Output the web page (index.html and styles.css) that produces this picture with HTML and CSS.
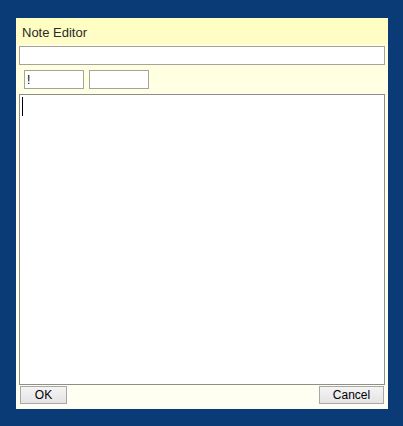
FILE: index.html
```html
<!DOCTYPE html>
<html>
<head>
<meta charset="utf-8">
<link rel="stylesheet" href="styles.css">
</head>
<body>
<div class="dialog">
  <div class="header">Note Editor</div>
  <input class="title-input" type="text" value="">
  <div class="tag-row">
    <input class="tag-input" type="text" value="!">
    <input class="tag-input" type="text" value="">
  </div>
  <div class="editor">
    <textarea class="body-text"></textarea>
    <span class="caret"></span>
  </div>
  <div class="actions">
    <button class="btn btn-ok">OK</button>
    <button class="btn btn-cancel">Cancel</button>
  </div>
</div>
</body>
</html>
```
FILE: styles.css
```css
html, body {
  margin: 0;
  padding: 0;
}
body {
  background: #0b3b77;
  width: 403px;
  height: 426px;
  padding: 18px 0 0 16px;
  box-sizing: border-box;
  font-family: "Liberation Sans", Tahoma, sans-serif;
}
.dialog {
  width: 372px;
  height: 391px;
  box-sizing: border-box;
  padding: 0 3px 5px 3px;
  display: flex;
  flex-direction: column;
  background: linear-gradient(#ffffd6 0px, #ffffe6 80px, #fffff2 391px);
}
.header {
  height: 26px;
  box-sizing: border-box;
  margin: 0 -3px;
  padding: 2px 0 0 6px;
  display: flex;
  align-items: center;
  font-size: 13px;
  color: #2a2a2a;
  background: linear-gradient(#ffffc0, #fffcc8);
}
.title-input {
  margin: 2px 0 0 0;
  width: 366px;
  height: 19px;
  box-sizing: border-box;
  border: 1px solid #a4a49c;
  background: #fff;
  padding: 0 3px;
  outline: none;
  font-family: "Liberation Sans", sans-serif;
  font-size: 12px;
}
.tag-row {
  margin-top: 5px;
  display: flex;
  gap: 5px;
  padding-left: 5px;
}
.tag-input {
  margin: 0;
  width: 60px;
  height: 19px;
  box-sizing: border-box;
  border: 1px solid #a4a49c;
  background: #fff;
  padding: 0 2px;
  outline: none;
  font-family: "Liberation Sans", sans-serif;
  font-size: 12px;
  color: #000;
}
.editor {
  position: relative;
  margin-top: 5px;
  height: 291px;
}
.body-text {
  display: block;
  margin: 0;
  width: 366px;
  height: 291px;
  box-sizing: border-box;
  border: 1px solid #8e8e8a;
  background: #fff;
  resize: none;
  outline: none;
}
.caret {
  position: absolute;
  left: 3px;
  top: 3px;
  width: 1px;
  height: 19px;
  background: #000;
}
.actions {
  margin-top: 1px;
  display: flex;
  justify-content: space-between;
  padding: 0 1px;
}
.btn {
  margin: 0;
  height: 18px;
  box-sizing: border-box;
  border: 1px solid #a8a8a8;
  background: linear-gradient(#f4f4f4, #e4e4e4);
  font-family: "Liberation Sans", sans-serif;
  font-size: 12px;
  color: #000;
  padding: 0;
  line-height: 16px;
}
.btn-ok {
  width: 47px;
}
.btn-cancel {
  width: 65px;
}
```
